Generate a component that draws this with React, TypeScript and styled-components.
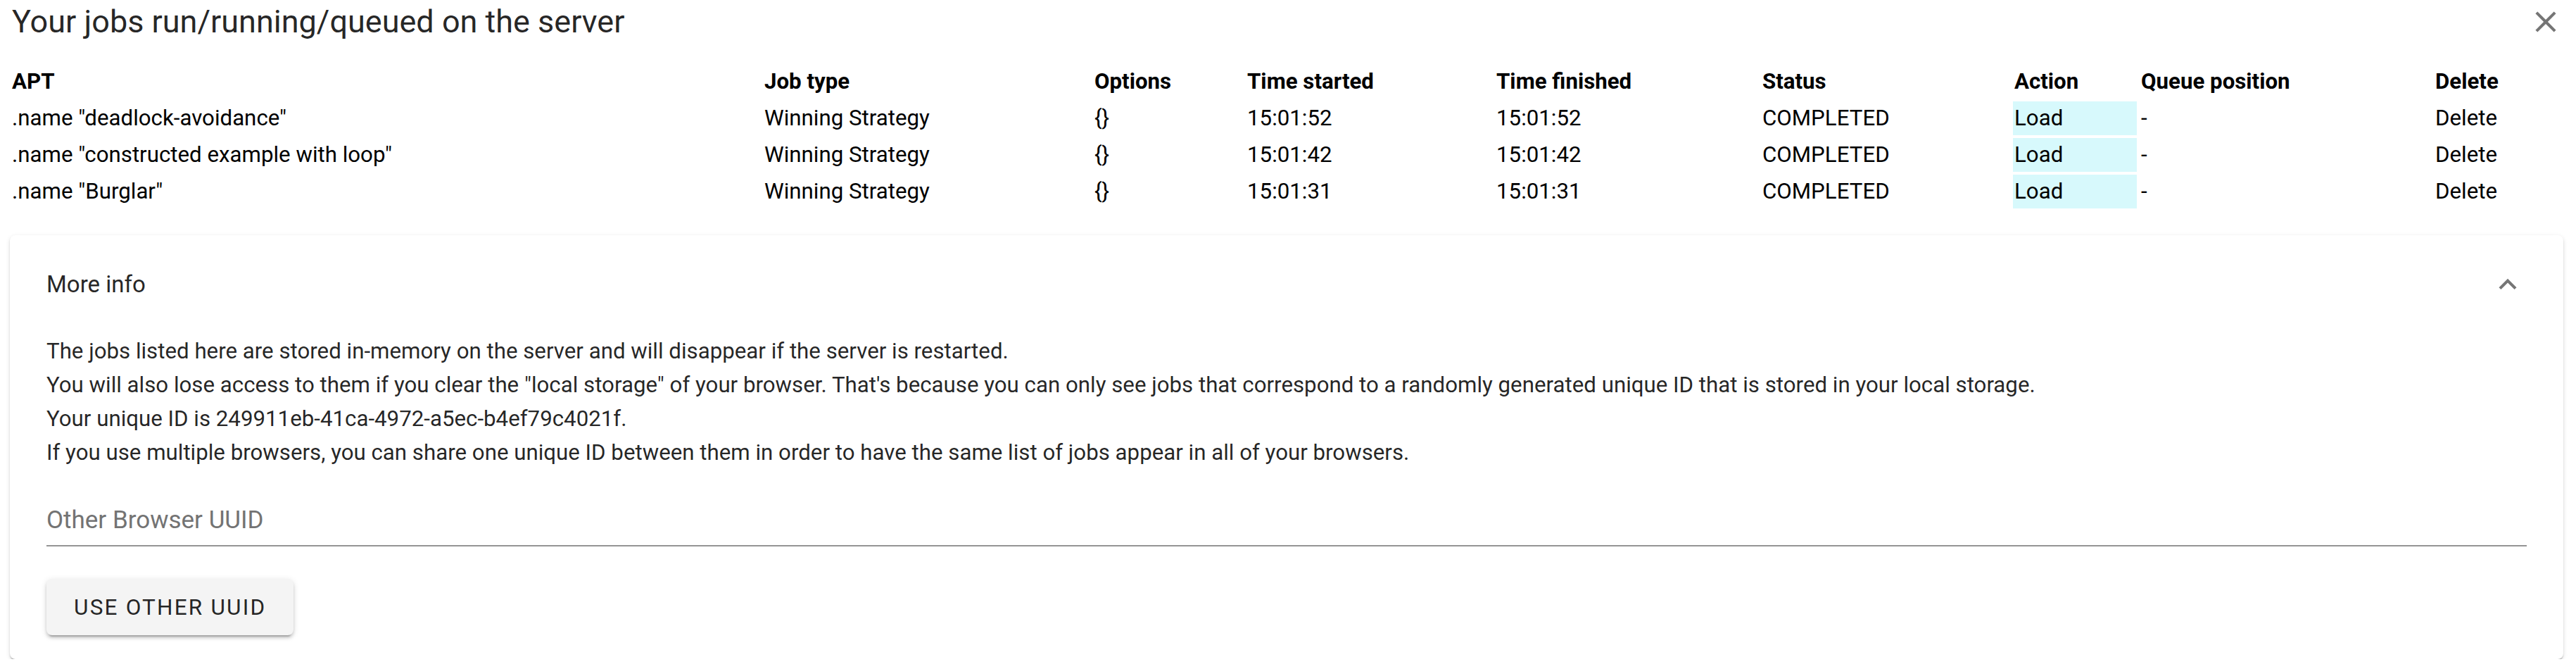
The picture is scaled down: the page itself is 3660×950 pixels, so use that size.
import React from "react";
import styled, { createGlobalStyle } from "styled-components";

const GlobalStyle = createGlobalStyle`
  html, body {
    margin: 0;
    padding: 0;
    background: #ffffff;
  }
  body {
    font-family: Roboto, "Noto Sans", "Liberation Sans", sans-serif;
    color: rgba(0, 0, 0, 0.87);
  }
`;

const Page = styled.div`
  padding: 0 18px 0 11px;
`;

const Header = styled.div`
  display: flex;
  align-items: center;
  justify-content: space-between;
  margin-top: 6px;
  height: 50px;
`;

const Title = styled.h2`
  margin: 0;
  padding-left: 6px;
  font-size: 45px;
  font-weight: 400;
  line-height: 50px;
  color: rgba(0, 0, 0, 0.87);
`;

const IconButton = styled.button`
  display: flex;
  align-items: center;
  justify-content: center;
  width: 50px;
  height: 50px;
  padding: 0;
  border: none;
  background: transparent;
  color: rgba(0, 0, 0, 0.54);
  cursor: pointer;
`;

const Icon = styled.svg`
  width: 50px;
  height: 50px;
  fill: currentColor;
`;

const Table = styled.table`
  margin-top: 32px;
  table-layout: fixed;
  width: 3635px;
  border-collapse: separate;
  border-spacing: 4px;
  font-size: 31.25px;
  line-height: 44px;
  color: #000;
`;

const Th = styled.th`
  padding: 2px;
  text-align: left;
  font-weight: 700;
  white-space: nowrap;
`;

const Td = styled.td<{ $highlight?: boolean }>`
  padding: 2px;
  white-space: nowrap;
  background: ${(p) => (p.$highlight ? "#d7f9fc" : "transparent")};
`;

const Card = styled.section`
  margin: 34px 0 0 3px;
  background: #fff;
  border-radius: 8px;
  box-shadow: 0 4px 2px -2px rgba(0, 0, 0, 0.2), 0 2px 2px 0 rgba(0, 0, 0, 0.14),
    0 2px 6px 0 rgba(0, 0, 0, 0.12);
`;

const Summary = styled.div`
  display: flex;
  align-items: center;
  justify-content: space-between;
  padding: 45px 52px 23px;
`;

const SummaryTitle = styled.span`
  font-size: 33px;
  line-height: 48px;
  color: rgba(0, 0, 0, 0.87);
`;

const SummaryIcon = styled.span`
  display: flex;
  width: 50px;
  height: 50px;
  margin-right: 2px;
  color: rgba(0, 0, 0, 0.54);
`;

const Details = styled.div`
  padding: 23px 52px 34px;
`;

const Paragraph = styled.p`
  margin: 0;
  font-size: 31.25px;
  line-height: 48px;
  color: rgba(0, 0, 0, 0.87);
`;

const Field = styled.input`
  display: block;
  box-sizing: content-box;
  width: 100%;
  margin-top: 41px;
  padding: 5px 0 11px;
  height: 50px;
  border: none;
  border-bottom: 2px solid #949494;
  outline: none;
  background: transparent;
  font-family: inherit;
  font-size: 35px;
  color: rgba(0, 0, 0, 0.87);
  &::placeholder {
    color: #737373;
    opacity: 1;
  }
`;

const Button = styled.button`
  display: block;
  margin-top: 46px;
  height: 80px;
  padding: 0 39px;
  border: none;
  border-radius: 8px;
  background: #f4f4f4;
  box-shadow: 0 6px 2px -4px rgba(0, 0, 0, 0.2), 0 4px 4px 0 rgba(0, 0, 0, 0.14),
    0 2px 10px 0 rgba(0, 0, 0, 0.12);
  font-family: inherit;
  font-size: 31.5px;
  font-weight: 400;
  letter-spacing: 2.2px;
  text-transform: uppercase;
  color: rgba(0, 0, 0, 0.87);
  cursor: pointer;
`;

const columns = [
  { label: "APT", width: 1065 },
  { label: "Job type", width: 465 },
  { label: "Options", width: 213 },
  { label: "Time started", width: 350 },
  { label: "Time finished", width: 374 },
  { label: "Status", width: 354 },
  { label: "Action", width: 176 },
  { label: "Queue position", width: 414 },
  { label: "Delete", width: 184 },
];

const jobs = [
  { apt: '.name "deadlock-avoidance"', time: "15:01:52" },
  { apt: '.name "constructed example with loop"', time: "15:01:42" },
  { apt: '.name "Burglar"', time: "15:01:31" },
];

export default function App() {
  return (
    <>
      <GlobalStyle />
      <Page>
        <Header>
          <Title>Your jobs run/running/queued on the server</Title>
          <IconButton aria-label="close">
            <Icon viewBox="0 0 24 24">
              <path d="M19 6.41 17.59 5 12 10.59 6.41 5 5 6.41 10.59 12 5 17.59 6.41 19 12 13.41 17.59 19 19 17.59 13.41 12z" />
            </Icon>
          </IconButton>
        </Header>

        <Table>
          <colgroup>
            {columns.map((c) => (
              <col key={c.label} style={{ width: c.width }} />
            ))}
          </colgroup>
          <thead>
            <tr>
              {columns.map((c) => (
                <Th key={c.label}>{c.label}</Th>
              ))}
            </tr>
          </thead>
          <tbody>
            {jobs.map((j) => (
              <tr key={j.apt}>
                <Td>{j.apt}</Td>
                <Td>Winning Strategy</Td>
                <Td>{"{}"}</Td>
                <Td>{j.time}</Td>
                <Td>{j.time}</Td>
                <Td>COMPLETED</Td>
                <Td $highlight>Load</Td>
                <Td>-</Td>
                <Td>Delete</Td>
              </tr>
            ))}
          </tbody>
        </Table>

        <Card>
          <Summary>
            <SummaryTitle>More info</SummaryTitle>
            <SummaryIcon>
              <Icon viewBox="0 0 24 24">
                <path d="M12 8l-6 6 1.41 1.41L12 10.83l4.59 4.58L18 14z" />
              </Icon>
            </SummaryIcon>
          </Summary>
          <Details>
            <Paragraph>
              The jobs listed here are stored in-memory on the server and will disappear if the server is restarted.
            </Paragraph>
            <Paragraph>
              You will also lose access to them if you clear the "local storage" of your browser. That's because you can
              only see jobs that correspond to a randomly generated unique ID that is stored in your local storage.
            </Paragraph>
            <Paragraph>Your unique ID is 249911eb-41ca-4972-a5ec-b4ef79c4021f.</Paragraph>
            <Paragraph>
              If you use multiple browsers, you can share one unique ID between them in order to have the same list of
              jobs appear in all of your browsers.
            </Paragraph>
            <Field placeholder="Other Browser UUID" />
            <Button>Use other UUID</Button>
          </Details>
        </Card>
      </Page>
    </>
  );
}
